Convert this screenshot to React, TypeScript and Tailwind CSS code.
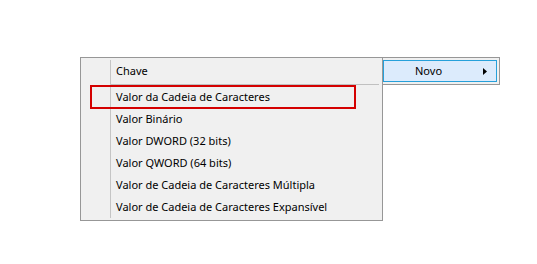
const ITEMS = [
    'Valor Binário',
    'Valor DWORD (32 bits)',
    'Valor QWORD (64 bits)',
    'Valor de Cadeia de Caracteres Múltipla',
    'Valor de Cadeia de Caracteres Expansível',
];

const MenuItem = ({ label }: { label: string }) => (
    <div className="h-[22px] flex items-center pl-[33px] text-[11px] text-black">{label}</div>
);

export default function App() {
    return (
        <div
            className="w-[537px] h-[264px] bg-white flex items-start pl-[80px] pt-[57px]"
            style={{ fontFamily: '"Noto Sans", "Open Sans", sans-serif' }}
        >
            {/* context menu */}
            <div className="relative w-[303px] h-[164px] bg-[#f0f0f0] border border-[#979797] p-[2px]">
                <div className="absolute left-[29px] top-[2px] bottom-[2px] w-px bg-[#c5c5c5]" />
                <MenuItem label="Chave" />
                <div className="ml-[28px] mr-[1px] h-[4px] flex items-center">
                    <div className="w-full h-px bg-[#c0c0c0]" />
                </div>
                <MenuItem label="Valor da Cadeia de Caracteres" />
                {ITEMS.map(item => (
                    <MenuItem key={item} label={item} />
                ))}
                {/* annotation */}
                <div className="absolute left-[9px] top-[27px] w-[266px] h-[24px] border-2 border-[#d40000]" />
            </div>

            {/* submenu */}
            <div className="w-[117px] h-[28px] bg-[#f0f0f0] border-y border-r border-[#979797] py-[2px] pr-[2px]">
                <div className="relative h-full bg-[#dcebfc] border border-[#26a0da] flex items-center pl-[31px] text-[11px] text-black">
                    <span>Novo</span>
                    <svg className="absolute right-[9px] top-[7px]" width="4" height="7" viewBox="0 0 4 7">
                        <path d="M0 0 L4 3.5 L0 7 Z" fill="#000" />
                    </svg>
                </div>
            </div>
        </div>
    );
}
